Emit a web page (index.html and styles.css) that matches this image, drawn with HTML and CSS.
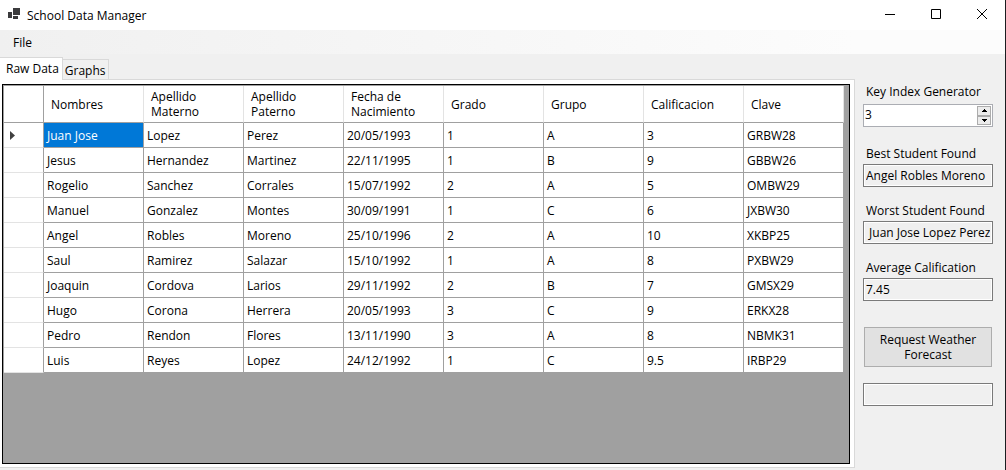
FILE: index.html
```html
<!DOCTYPE html>
<html lang="en">
<head>
<meta charset="utf-8">
<title>School Data Manager</title>
<link rel="stylesheet" href="styles.css">
</head>
<body>
<div class="window">
  <header class="titlebar">
    <svg class="app-icon" width="13" height="12" viewBox="0 0 13 12" aria-hidden="true"><path fill="#3b3b3d" d="M5 0h7v7H5zM0 4h4v6H0zM5 8h5v3H5z"/></svg>
    <h1 class="title">School Data Manager</h1>
    <div class="window-buttons">
      <button class="window-button" type="button" aria-label="Minimize"><svg width="10" height="10" viewBox="0 0 10 10"><path d="M0 5.5h10"/></svg></button>
      <button class="window-button" type="button" aria-label="Maximize"><svg width="10" height="10" viewBox="0 0 10 10"><path d="M.5.5h9v9h-9z"/></svg></button>
      <button class="window-button" type="button" aria-label="Close"><svg width="10" height="10" viewBox="0 0 10 10"><path d="M0 0l10 10M10 0L0 10"/></svg></button>
    </div>
  </header>
  <nav class="menubar"><button class="menu-item" type="button">File</button></nav>
  <div class="body">
    <main class="main">
      <div class="tabs" role="tablist">
        <button class="tab tab-active" type="button" role="tab" aria-selected="true">Raw Data</button>
        <button class="tab" type="button" role="tab" aria-selected="false">Graphs</button>
        <div class="tabs-rest"></div>
      </div>
      <div class="page" role="tabpanel">
        <div class="grid">
          <table class="table">
            <thead>
              <tr><th class="row-head"></th><th>Nombres</th><th>Apellido Materno</th><th>Apellido Paterno</th><th>Fecha de Nacimiento</th><th>Grado</th><th>Grupo</th><th>Calificacion</th><th>Clave</th></tr>
            </thead>
            <tbody>
              <tr><td class="row-head"><svg class="marker" width="5" height="9" viewBox="0 0 5 9"><path fill="#404040" d="M0 0l5 4.500L0 9z"/></svg></td><td class="selected">Juan Jose</td><td>Lopez</td><td>Perez</td><td>20/05/1993</td><td>1</td><td>A</td><td>3</td><td>GRBW28</td></tr>
              <tr><td class="row-head"></td><td>Jesus</td><td>Hernandez</td><td>Martinez</td><td>22/11/1995</td><td>1</td><td>B</td><td>9</td><td>GBBW26</td></tr>
              <tr><td class="row-head"></td><td>Rogelio</td><td>Sanchez</td><td>Corrales</td><td>15/07/1992</td><td>2</td><td>A</td><td>5</td><td>OMBW29</td></tr>
              <tr><td class="row-head"></td><td>Manuel</td><td>Gonzalez</td><td>Montes</td><td>30/09/1991</td><td>1</td><td>C</td><td>6</td><td>JXBW30</td></tr>
              <tr><td class="row-head"></td><td>Angel</td><td>Robles</td><td>Moreno</td><td>25/10/1996</td><td>2</td><td>A</td><td>10</td><td>XKBP25</td></tr>
              <tr><td class="row-head"></td><td>Saul</td><td>Ramirez</td><td>Salazar</td><td>15/10/1992</td><td>1</td><td>A</td><td>8</td><td>PXBW29</td></tr>
              <tr><td class="row-head"></td><td>Joaquin</td><td>Cordova</td><td>Larios</td><td>29/11/1992</td><td>2</td><td>B</td><td>7</td><td>GMSX29</td></tr>
              <tr><td class="row-head"></td><td>Hugo</td><td>Corona</td><td>Herrera</td><td>20/05/1993</td><td>3</td><td>C</td><td>9</td><td>ERKX28</td></tr>
              <tr><td class="row-head"></td><td>Pedro</td><td>Rendon</td><td>Flores</td><td>13/11/1990</td><td>3</td><td>A</td><td>8</td><td>NBMK31</td></tr>
              <tr><td class="row-head"></td><td>Luis</td><td>Reyes</td><td>Lopez</td><td>24/12/1992</td><td>1</td><td>C</td><td>9.5</td><td>IRBP29</td></tr>
            </tbody>
          </table>
        </div>
      </div>
    </main>
    <aside class="side">
      <div class="field">
        <label class="label" for="key">Key Index Generator</label>
        <div class="spinner">
          <input class="spinner-input" id="key" type="number" value="3">
          <div class="spinner-buttons">
            <button class="step" type="button" aria-label="Increase"><svg width="5" height="3" viewBox="0 0 5 3"><path d="M2 0h1v1h1v1h1v1H0V2h1V1h1z"/></svg></button>
            <button class="step" type="button" aria-label="Decrease"><svg width="5" height="3" viewBox="0 0 5 3"><path d="M0 0h5v1H4v1H3v1H2V2H1V1H0z"/></svg></button>
          </div>
        </div>
      </div>
      <div class="field">
        <label class="label" for="best">Best Student Found</label>
        <input class="box" id="best" type="text" readonly value="Angel Robles Moreno">
      </div>
      <div class="field">
        <label class="label" for="worst">Worst Student Found</label>
        <input class="box" id="worst" type="text" readonly value=" Juan Jose Lopez Perez">
      </div>
      <div class="field">
        <label class="label" for="average">Average Calification</label>
        <input class="box" id="average" type="text" readonly value="7.45">
      </div>
      <button class="request" type="button">Request Weather Forecast</button>
      <input class="box" type="text" readonly aria-label="Weather forecast">
    </aside>
  </div>
</div>
</body>
</html>
```

FILE: styles.css
```css
* { box-sizing: border-box; }
body {
  margin: 0;
  background: #f0f0f0;
  color: #000;
  font: 12px/15px "Open Sans", "Noto Sans", sans-serif;
}
button, input { font: inherit; color: inherit; border-radius: 0; margin: 0; }
.window {
  display: flex;
  flex-direction: column;
  min-height: 100vh;
  border-right: 1px solid #1b1d20;
}
.titlebar {
  display: flex;
  align-items: center;
  height: 30px;
  padding-left: 8px;
  gap: 6px;
  background: #fff;
}
.app-icon { margin-bottom: 2px; }
.title { margin: 0; flex: 1; font-size: 12px; font-weight: 400; }
.window-buttons { display: flex; align-self: stretch; padding-bottom: 2px; }
.window-button {
  display: grid;
  place-items: center;
  width: 46px;
  padding: 0;
  border: 0;
  background: none;
}
.window-button path { fill: none; stroke: #000; }
.menubar {
  display: flex;
  height: 24px;
  padding-left: 8px;
  background: linear-gradient(90deg, #f0f0f0, #fcfcfc 85%);
}
.menu-item { padding: 0 5px; border: 0; background: none; }
.body { display: flex; flex: 1; }
.main { display: flex; flex: 1; flex-direction: column; min-width: 0; padding: 3px 0 2px; }
.tabs { display: flex; align-items: flex-end; height: 23px; }
.tab {
  height: 21px;
  padding: 1px 2px 0;
  border: 1px solid #d9d9d9;
  border-left: 0;
  background: #f0f0f0;
  white-space: nowrap;
}
.tab-active { height: 23px; padding: 0 3px 2px 6px; border-bottom: 0; background: #fff; }
.tabs-rest { flex: 1; border-bottom: 1px solid #d9d9d9; }
.page {
  display: flex;
  flex: 1;
  padding: 4px 4px 3px 2px;
  border: 1px solid #d9d9d9;
  border-width: 0 1px 1px 0;
  background: #fff;
}
.grid { flex: 1; min-width: 0; padding: 1px; border: 1px solid #000; background: #a0a0a0; }
.table { border-collapse: separate; border-spacing: 0; table-layout: fixed; width: 840px; }
.table th, .table td {
  height: 25px;
  padding: 0 3px;
  border: 1px solid #a0a0a0;
  border-width: 0 1px 1px 0;
  background: #fff;
  font-weight: 400;
  text-align: left;
}
.table th { height: 37px; padding: 0 20px 0 7px; border-right-color: #e3e3e3; line-height: 15px; }
.table .row-head { width: 40px; padding: 0 6px; border-right-color: #a0a0a0; }
.table td.row-head { border-bottom-color: #e3e3e3; }
.table .selected { background: #0078d7; color: #fff; }
.marker { display: block; }
.side {
  display: flex;
  flex-direction: column;
  width: 150px;
  padding: 30px 12px 0 8px;
}
.field { display: flex; flex-direction: column; gap: 2px; margin-bottom: 16px; }
.label { padding-left: 3px; line-height: 16px; white-space: nowrap; }
.box {
  width: 100%;
  height: 23px;
  padding: 0 2px 1px;
  border: 1px solid #7a7a7a;
  background: #f0f0f0;
  box-shadow: inset 0 0 0 1px #fff;
}
.spinner {
  display: flex;
  height: 23px;
  margin: 2px 0 3px;
  padding: 1px;
  border: 1px solid #abadb3;
  background: #fff;
}
.spinner-input {
  flex: 1;
  min-width: 0;
  padding: 0 0 2px;
  border: 0;
  background: none;
  appearance: textfield;
}
.spinner-input::-webkit-inner-spin-button { display: none; }
.spinner-buttons { display: flex; flex-direction: column; width: 14px; }
.step {
  display: grid;
  flex: 1;
  place-items: center;
  padding: 0;
  border: 1px solid #acacac;
  background: #ececec;
}
.request {
  height: 40px;
  margin: 10px 1px 16px;
  padding: 0 12px;
  border: 1px solid #adadad;
  background: #e1e1e1;
}
```
